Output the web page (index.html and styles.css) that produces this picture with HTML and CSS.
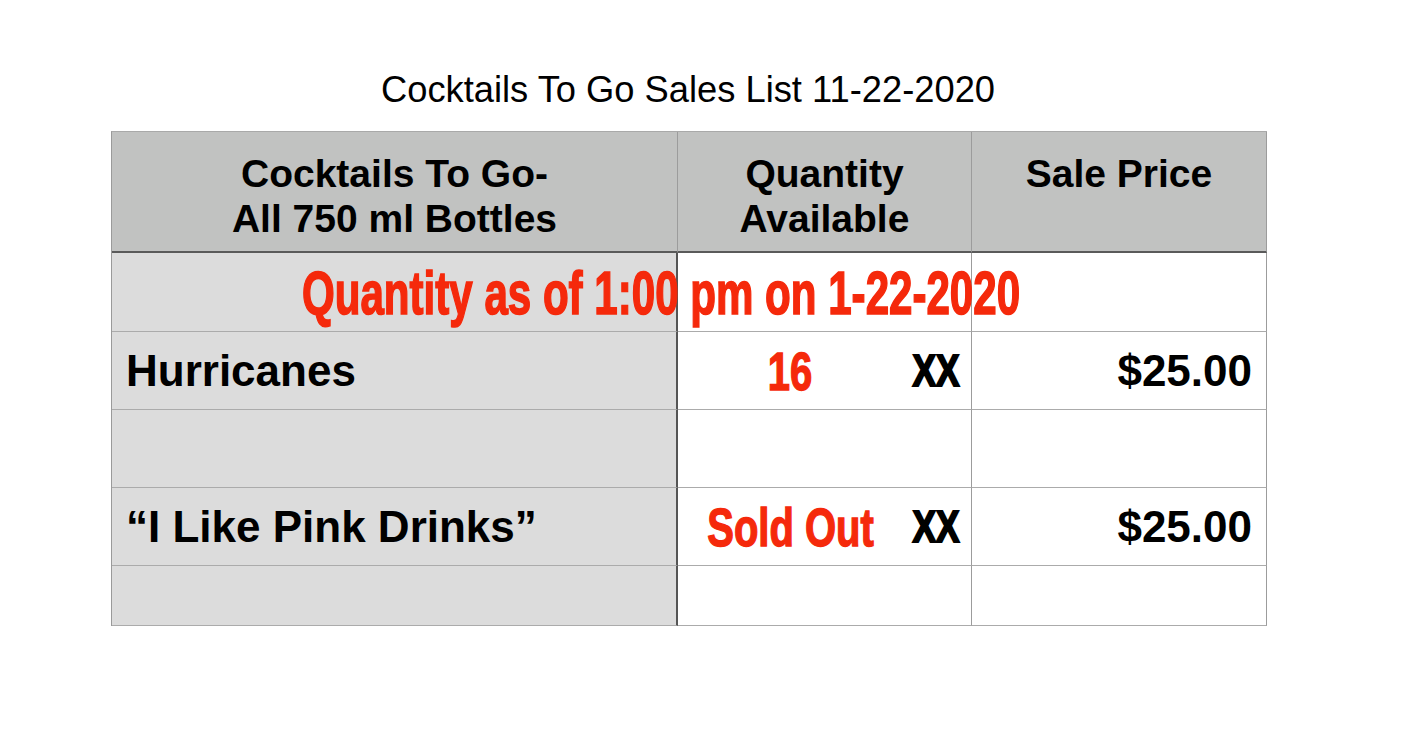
FILE: index.html
```html
<!DOCTYPE html>
<html lang="en">
<head>
    <meta charset="UTF-8">
    <meta name="viewport" content="width=device-width, initial-scale=1.0">
    <title>Cocktails To Go Sales List</title>
    <link rel="stylesheet" href="styles.css">
</head>
<body>
    <div class="sheet">
        <h1 class="title">Cocktails To Go Sales List 11-22-2020</h1>

        <div class="table">
            <div class="cell head">Cocktails To Go-<br>All 750 ml Bottles</div>
            <div class="cell head">Quantity<br>Available</div>
            <div class="cell head">Sale Price</div>

            <div class="cell name note-row">
                <span class="note">Quantity as of 1:00 pm on 1-22-2020</span>
            </div>
            <div class="cell qty"></div>
            <div class="cell price"></div>

            <div class="cell name">Hurricanes</div>
            <div class="cell qty">
                <span class="qty-value"><span class="squeeze">16</span></span>
                <span class="mark">XX</span>
            </div>
            <div class="cell price">$25.00</div>

            <div class="cell name"></div>
            <div class="cell qty"></div>
            <div class="cell price"></div>

            <div class="cell name">“I Like Pink Drinks”</div>
            <div class="cell qty">
                <span class="qty-value"><span class="squeeze">Sold Out</span></span>
                <span class="mark">XX</span>
            </div>
            <div class="cell price">$25.00</div>

            <div class="cell name"></div>
            <div class="cell qty"></div>
            <div class="cell price"></div>
        </div>
    </div>
</body>
</html>
```

FILE: styles.css
```css
* {
    margin: 0;
    padding: 0;
    box-sizing: border-box;
}
body {
    background: white;
    font-family: "Liberation Sans", Arial, sans-serif;
    color: black;
}
.sheet {
    width: 1156px;
    margin-left: 111px;
    padding-top: 68px;
}
.title {
    font-size: 36.3px;
    font-weight: normal;
    line-height: 44px;
    text-align: center;
    margin-bottom: 19px;
    padding-right: 2px;
}
.table {
    display: grid;
    grid-template-columns: 566px 294px 295px;
    grid-template-rows: 121px 79px 78px 78px 78px 60px;
    border-top: 1px solid #a9a9a9;
    border-left: 1px solid #9a9a9a;
}
.cell {
    border-right: 1px solid #9c9c9c;
    border-bottom: 1px solid #ababab;
    display: flex;
    align-items: center;
    font-size: 44px;
    font-weight: bold;
}
.head {
    background: #c1c2c1;
    border-bottom: 2px solid #5a5a5a;
    align-items: flex-start;
    justify-content: center;
    text-align: center;
    font-size: 39px;
    line-height: 45px;
    padding-top: 19px;
}
.name {
    background: #dcdcdc;
    border-right: 2px solid #555;
    padding-left: 14px;
}
.price {
    justify-content: flex-end;
    padding-right: 14px;
}
.note-row {
    position: relative;
}
.note {
    position: absolute;
    top: 1px;
    left: 190px;
    line-height: 79px;
    font-size: 61px;
    color: #f5290b;
    -webkit-text-stroke: 1.6px #f5290b;
    white-space: nowrap;
    transform-origin: left center;
    transform: scaleX(0.69);
    z-index: 2;
}
.qty-value {
    width: 224px;
    text-align: center;
    font-size: 54px;
    color: #f5290b;
    -webkit-text-stroke: 1.4px #f5290b;
    white-space: nowrap;
}
.squeeze {
    display: inline-block;
    transform: scaleX(0.74);
}
.mark {
    width: 68px;
    text-align: center;
    font-size: 44px;
    display: inline-block;
    transform: scaleX(0.8);
    -webkit-text-stroke: 2px #000;
}
```
